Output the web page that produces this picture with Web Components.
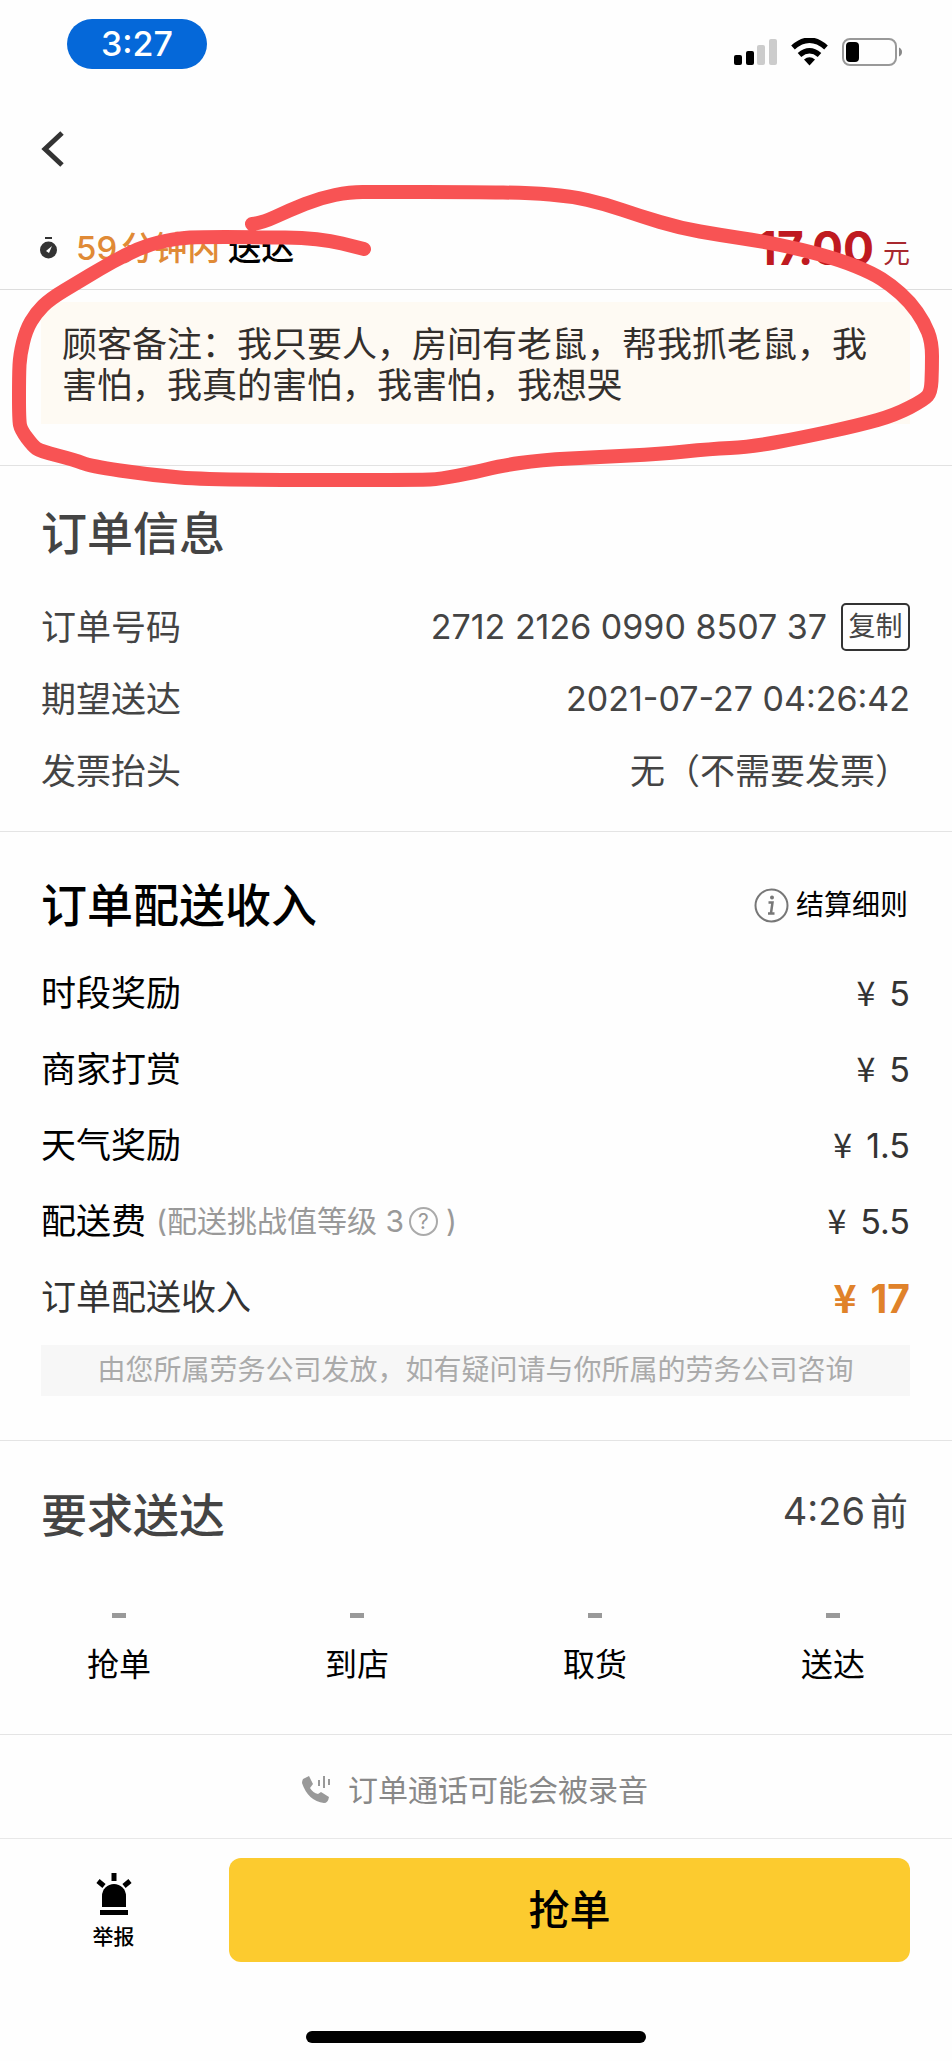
<!DOCTYPE html>
<html lang="zh-CN">
<head>
<meta charset="utf-8">
<meta name="viewport" content="width=device-width, initial-scale=1">
<title>订单详情</title>
<style>
  body {
    margin: 0;
    background: #fefefe;
    color: #333;
    font-family: Inter, "Noto Sans CJK SC", sans-serif;
    font-size: 35px;
    line-height: 48px;
  }
</style>
</head>
<body>
<order-page></order-page>

<script>
// every element here is a template string + open shadow root
function define(name, html, setup) {
  const template = document.createElement('template');
  template.innerHTML = html;
  customElements.define(name, class extends HTMLElement {
    constructor() {
      super();
      this.attachShadow({ mode: 'open' });
      this.shadowRoot.appendChild(template.content.cloneNode(true));
      if (setup) setup(this);
    }
  });
}

// status bar
define('status-bar', `
  <style>
    :host { display: flex; justify-content: space-between; padding: 19px 50px 0 67px; }
    .time {
      width: 140px; height: 50px; border-radius: 25px; background: #0568d9;
      color: #fff; font-size: 34px; font-weight: 500; line-height: 50px; text-align: center;
    }
    .icons { display: flex; gap: 14px; padding-top: 19px; }
    svg { display: block; }
  </style>
  <div class="time">3:27</div>
  <div class="icons">
    <svg width="43" height="28" viewBox="0 0 43 28">
      <rect x="0" y="17" width="8" height="10" rx="2"/>
      <rect x="12" y="13" width="8" height="14" rx="2"/>
      <rect x="23" y="7" width="8" height="20" rx="2" fill="#ccc"/>
      <rect x="35" y="1" width="8" height="26" rx="2" fill="#ccc"/>
    </svg>
    <svg width="37" height="28" viewBox="0 0 37 28">
      <path d="M2 9.500Q18.500-5 35 9.500" fill="none" stroke="#000" stroke-width="5.500"/>
      <path d="M8.500 17Q18.500 8.500 28.500 17" fill="none" stroke="#000" stroke-width="5.500"/>
      <path d="M13 21.500Q18.500 17 24 21.500L18.500 27.500Z"/>
    </svg>
    <svg width="60" height="28" viewBox="0 0 60 28">
      <rect x="1" y="1" width="53" height="26" rx="7" fill="none" stroke="#999" stroke-width="2"/>
      <rect x="4" y="4" width="13" height="20" rx="4"/>
      <path d="M57 9.500Q60 11 60 14T57 18.500Z" fill="#888"/>
    </svg>
  </div>
`);

// top navigation with the back arrow
define('nav-bar', `
  <style>
    :host { display: flex; align-items: center; height: 160px; padding-left: 41px; }
    button { border: 0; padding: 0; background: none; }
    svg { display: block; }
  </style>
  <button aria-label="返回">
    <svg width="24" height="36" viewBox="0 0 24 36"><path d="M21 2L4 18L21 34" fill="none" stroke="#333" stroke-width="5"/></svg>
  </button>
`);

define('delivery-head', `
  <style>
    :host {
      display: flex; align-items: center; height: 78px; padding: 0 42px 2px 40px; margin-top: -20px;
      border-bottom: 1px solid #ddd; font-size: 33px; font-weight: 500; color: #000;
    }
    svg { margin-right: 19px; }
    .limit { display: flex; gap: 4px; color: #e08a36; margin-right: 8px; }
    .price { margin-left: auto; color: #bf1a20; font-size: 46px; font-weight: 700; }
    .unit { color: #a8282e; font-size: 27px; font-weight: 400; margin-left: 9px; padding-top: 12px; }
  </style>
  <svg width="17" height="22" viewBox="0 0 17 22">
    <rect x="5" y="0" width="7" height="2" fill="#333"/>
    <circle cx="8.500" cy="13" r="8.500" fill="#333"/>
    <path d="M6 14L12 9L9 16Z" fill="#fff"/>
  </svg>
  <span class="limit"><span>59</span><span>分钟内</span></span><span>送达</span>
  <span class="price">17.00</span><span class="unit">元</span>
`);

define('customer-remark', `
  <style>
    :host { display: block; padding: 12px 42px 41px 41px; border-bottom: 1px solid #e2e2e2; }
    p { margin: 0; padding: 22px 21px 18px; background: #fefaf3; color: #332f2c; line-height: 41px; }
  </style>
  <p><slot></slot></p>
`);

define('page-section', `
  <style>
    :host { display: block; padding: 0 42px 0 41px; border-bottom: 1px solid #e4e4e4; }
    header { display: flex; align-items: center; justify-content: space-between; }
    h2 { margin: 0; font-size: 46px; line-height: 64px; font-weight: 500; color: var(--title-color, #444); }
  </style>
  <header><h2></h2><slot name="extra"></slot></header>
  <slot></slot>
`, el => {
  el.shadowRoot.querySelector('h2').textContent = el.getAttribute('heading');
});

define('info-row', `
  <style>
    :host { display: flex; align-items: center; justify-content: space-between; height: 72px; color: #444; }
    .value { display: flex; align-items: center; }
    :host([numeric]) .value { font-size: 34px; }
  </style>
  <slot name="label"></slot>
  <span class="value"><slot></slot></span>
`);

define('copy-button', `
  <style>
    :host { display: block; margin-left: 14px; }
    button {
      display: block; width: 69px; height: 48px; padding: 0; background: none;
      border: 2px solid #333; border-radius: 5px; color: #444; font: inherit; font-size: 27px; line-height: 42px;
    }
  </style>
  <button><slot></slot></button>
`);

define('fee-row', `
  <style>
    :host { display: flex; align-items: center; height: 76px; color: #000; }
    .note { display: flex; align-items: center; color: #999; font-size: 30px; margin-left: 10px; }
    .money { margin-left: auto; color: #333; font-size: 34px; }
    .yen { font-family: "Noto Sans CJK SC", sans-serif; margin-right: 14px; }
    :host([total]) { color: #333; }
    :host([total]) .money { color: #e0822a; font-size: 39px; font-weight: 700; }
  </style>
  <span><slot></slot></span>
  <span class="note"><slot name="note"></slot></span>
  <span class="money"><span class="yen">¥</span><span class="num"></span></span>
`, el => {
  el.shadowRoot.querySelector('.num').textContent = el.getAttribute('amount');
});

define('help-icon', `
  <style>
    :host { display: block; margin: 0 8px 0 5px; }
    button {
      display: block; box-sizing: border-box; width: 29px; height: 29px; padding: 0; background: none;
      border: 2px solid #aaa; border-radius: 50%; color: #999; font: inherit; font-size: 21px; line-height: 25px;
    }
  </style>
  <button aria-label="说明">?</button>
`);

define('rules-link', `
  <style>
    :host { display: block; font-size: 28px; padding-right: 2px; }
    a { display: flex; align-items: center; gap: 7px; color: #000; text-decoration: none; }
  </style>
  <a href="#rules">
    <svg width="35" height="35" viewBox="0 0 35 35">
      <circle cx="17.500" cy="17.500" r="16" fill="none" stroke="#777" stroke-width="2"/>
      <path d="M14.500 14.500H18.500L17 25M14 25.500H20.500" fill="none" stroke="#777" stroke-width="2.500"/>
      <circle cx="18" cy="9.500" r="2" fill="#777"/>
    </svg>
    <slot></slot>
  </a>
`);

define('step-item', `
  <style>
    :host { display: flex; flex: 1; flex-direction: column; align-items: center; font-size: 32px; color: #000; }
    i { width: 14px; height: 5px; background: #999; margin-bottom: 23px; }
  </style>
  <i></i>
  <span><slot></slot></span>
`);

define('record-tip', `
  <style>
    :host {
      display: flex; align-items: center; justify-content: center; gap: 18px; height: 97px;
      border-bottom: 1px solid #e8e8e8; padding: 6px 2px 0 0; font-size: 30px; color: #888;
    }
  </style>
  <svg width="28" height="28" viewBox="0 0 28 28">
    <path d="M1 3L7 0L11 8L8 12Q11 17 16 18L19 16L27 21Q26 27 22 27Q6 25 0 7Q0 5 1 3Z" fill="#999"/>
    <path d="M17 4V10M22 0V12M27 3V9" stroke="#999" stroke-width="2"/>
  </svg>
  <slot></slot>
`);

define('action-bar', `
  <style>
    :host { display: flex; padding: 19px 42px 69px 0; }
    button { border: 0; padding: 0; background: none; font: inherit; color: #000; }
    .report {
      display: flex; flex-direction: column; align-items: center; flex: 0 0 229px; box-sizing: border-box;
      padding: 15px 2px 0 0; font-size: 21px; font-weight: 500; line-height: 44px;
    }
    .grab { flex: 1; height: 104px; border-radius: 12px; background: #fccb2f; font-size: 41px; font-weight: 500; }
  </style>
  <button class="report">
    <svg width="36" height="42" viewBox="0 0 36 42">
      <path d="M18 0V8M2 8L8 13M34 8L28 13" stroke="#000" stroke-width="5"/>
      <path d="M6 34V23A12 12 0 0 1 30 23V34Z"/>
      <rect x="4" y="37" width="28" height="5"/>
    </svg>
    举报
  </button>
  <button class="grab">抢单</button>
`);

define('home-bar', `
  <style>
    :host { display: block; padding-bottom: 18px; }
    div { width: 340px; height: 12px; margin: 0 auto; border-radius: 6px; background: #000; }
  </style>
  <div></div>
`);

// freehand red marker loop, lies over the remark
define('marker-loop', `
  <style>
    :host { position: absolute; top: 0; left: 0; width: 100%; pointer-events: none; }
    svg { display: block; width: 100%; }
  </style>
  <svg viewBox="0 0 952 520">
    <path fill="none" stroke="#f85354" stroke-width="14" stroke-linecap="round" stroke-linejoin="round"/>
  </svg>
`, el => {
  const pts = [
    [252, 224], [262, 223], [290, 210], [320, 198], [350, 192], [375, 192], [476, 192], [530, 193], [570, 196],
    [605, 204], [640, 216], [680, 228], [720, 235], [760, 241], [800, 249], [840, 260], [872, 273], [891, 285],
    [910, 302], [924, 322], [932, 342], [932, 370], [931, 392], [924, 400], [895, 415], [860, 425], [800, 438],
    [750, 447], [710, 449], [660, 454], [600, 457], [540, 460], [500, 466], [476, 472], [440, 479], [420, 480],
    [210, 480], [150, 475], [90, 466], [75, 460], [40, 451], [33, 446], [21, 430], [19, 420], [19, 375],
    [20, 355], [26, 330], [36, 313], [50, 299], [80, 281], [100, 269], [125, 255], [150, 244], [180, 238],
    [200, 237], [250, 237], [320, 238], [364, 249]
  ];
  let d = `M${pts[0]}`;
  for (let i = 1; i < pts.length - 1; i++) {
    const [x, y] = pts[i];
    const [nx, ny] = pts[i + 1];
    d += `Q${x} ${y} ${(x + nx) / 2} ${(y + ny) / 2}`;
  }
  d += `L${pts[pts.length - 1]}`;
  el.shadowRoot.querySelector('path').setAttribute('d', d);
});

define('order-page', `
  <style>
    :host { display: block; position: relative; }
    .order { padding-top: 35px; padding-bottom: 24px; }
    .order info-row:first-of-type { margin-top: 26px; }
    .income { --title-color: #000; padding-top: 41px; padding-bottom: 44px; }
    .income fee-row:first-of-type { margin-top: 18px; }
    .tip { margin: 10px 0 0; background: #f7f7f7; color: #aaa; font-size: 28px; line-height: 51px; text-align: center; }
    .deliver { padding-top: 42px; }
    .before { display: flex; gap: 5px; padding: 0 2px 8px 0; font-size: 38px; color: #444; }
    .steps { display: flex; margin: 66px -42px 0 -41px; padding-bottom: 45px; }
  </style>
  <status-bar></status-bar>
  <nav-bar></nav-bar>
  <delivery-head></delivery-head>
  <customer-remark>顾客备注：我只要人，房间有老鼠，帮我抓老鼠，我害怕，我真的害怕，我害怕，我想哭</customer-remark>

  <page-section class="order" heading="订单信息">
    <info-row numeric><span slot="label">订单号码</span>2712 2126 0990 8507 37<copy-button>复制</copy-button></info-row>
    <info-row numeric><span slot="label">期望送达</span>2021-07-27 04:26:42</info-row>
    <info-row><span slot="label">发票抬头</span>无（不需要发票）</info-row>
  </page-section>

  <page-section class="income" heading="订单配送收入">
    <rules-link slot="extra">结算细则</rules-link>
    <fee-row amount="5">时段奖励</fee-row>
    <fee-row amount="5">商家打赏</fee-row>
    <fee-row amount="1.5">天气奖励</fee-row>
    <fee-row amount="5.5">配送费<span slot="note">(配送挑战值等级 3</span><help-icon slot="note"></help-icon><span slot="note">)</span></fee-row>
    <fee-row amount="17" total>订单配送收入</fee-row>
    <p class="tip">由您所属劳务公司发放，如有疑问请与你所属的劳务公司咨询</p>
  </page-section>

  <page-section class="deliver" heading="要求送达">
    <span class="before" slot="extra"><span>4:26</span><span>前</span></span>
    <div class="steps">
      <step-item>抢单</step-item>
      <step-item>到店</step-item>
      <step-item>取货</step-item>
      <step-item>送达</step-item>
    </div>
  </page-section>

  <record-tip>订单通话可能会被录音</record-tip>
  <action-bar></action-bar>
  <home-bar></home-bar>
  <marker-loop></marker-loop>
`);
</script>
</body>
</html>
